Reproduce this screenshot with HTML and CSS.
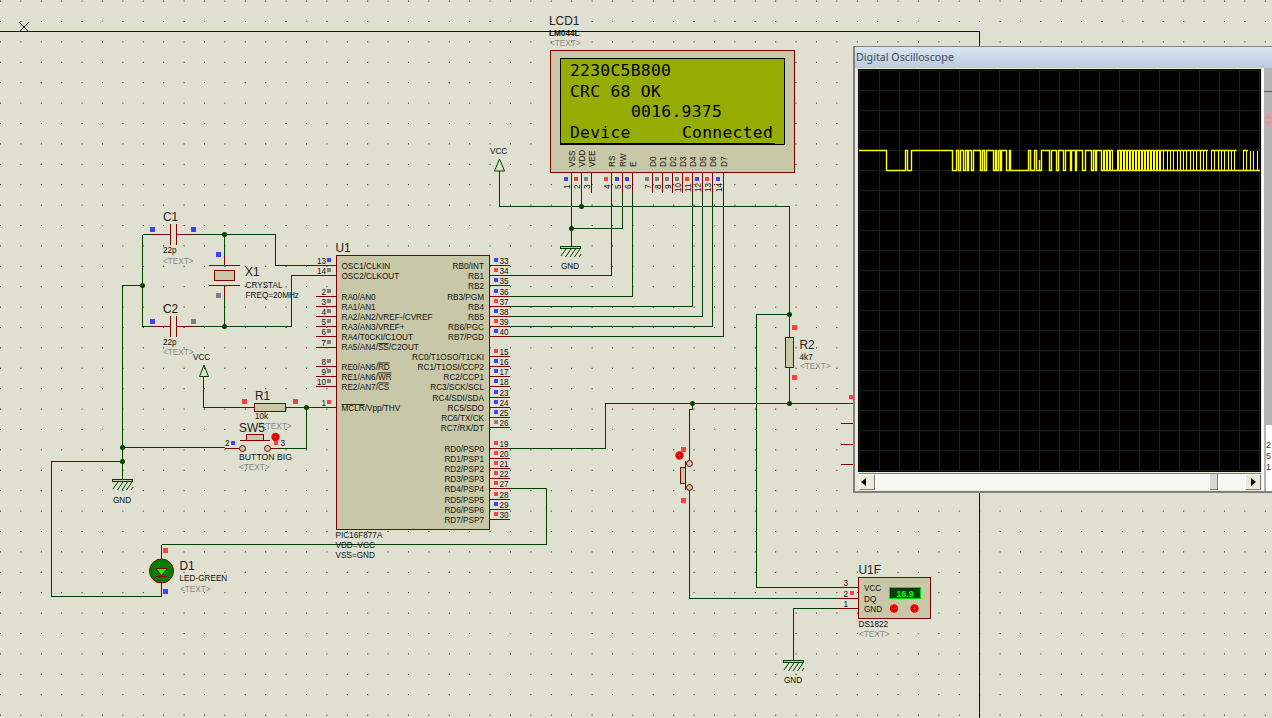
FILE: index.html
```html
<!DOCTYPE html>
<html lang="en">
<head>
<meta charset="utf-8">
<title>Proteus schematic</title>
<link rel="stylesheet" href="styles.css">
</head>
<body>
<main class="stage">
<svg class="sheet" width="1272" height="718" viewBox="0 0 1272 718">
  <defs>
    <pattern id="dots" patternUnits="userSpaceOnUse" width="20.4" height="20.4" x="0" y="0.6">
      <rect class="dot" x="0" y="0" width="1" height="1"/>
    </pattern>
    <g id="gnd">
      <rect class="gnd-bar" x="-10.5" y="0" width="20" height="2"/>
      <path class="hatch" d="M-10 10L-5 3M-5.500 11L0 3M-1 11L4.500 3M3.500 11L9 3M8 11L10 8"/>
    </g>
    <g id="probe">
      <circle class="probe-a" r="4.200"/>
      <circle class="probe-b" r="2.200"/>
      <path class="probe-c" d="M-1.500 0H1.500M0 -1.500V1.500"/>
    </g>
  </defs>
  <rect class="dots" width="1272" height="718"/>
  <path class="border" d="M0 31.500H979.500V718"/>
  <path class="xmark" d="M19 22L29 32M29 22L19 32"/>

  <!-- wires -->
  <path class="wire" d="M499.500 171V206.500H789.500V403.500M581.500 193V206.500M571.500 193V246M571.500 228.500H622.500V193M611.500 193V275.500H510M632.500 193V296.500H510M692.500 193V306.500H510M702.500 193V316.500H510M712.500 193V326.500H510M723.500 193V336.500H510"/>
  <path class="wire" d="M122.500 479V285.500H142.500M142.500 234.500V326.500M142.500 234.500H152M193 234.500H275.500V265.500H316M142.500 326.500H152M193 326.500H291.500V275.500H316M224.500 234.500V255M224.500 297V326.500"/>
  <path class="wire" d="M203.500 377V407.500H243M297 407.500H316M306.500 407.500V448.500H280M122.500 447.500H225M122.500 461.500H51.500V596.500H161.500M161.500 544.500H546.500V488.500H510M510 448.500H605.500V403.500H841"/>
  <path class="wire" d="M789.500 314.500H756.500V587.500H838M692.500 403.500V409.500H689.500V450M689.500 500V598.500H838M838 608.500H793.500V660"/>

  <g class="junctions">
    <circle cx="581.500" cy="206.500" r="2.500"/><circle cx="571.500" cy="228.500" r="2.500"/>
    <circle cx="142.500" cy="285.500" r="2.500"/><circle cx="224.500" cy="234.500" r="2.500"/>
    <circle cx="224.500" cy="326.500" r="2.500"/><circle cx="306.500" cy="407.500" r="2.500"/>
    <circle cx="122.500" cy="447.500" r="2.500"/><circle cx="122.500" cy="461.500" r="2.500"/>
    <circle cx="789.500" cy="314.500" r="2.500"/><circle cx="789.500" cy="403.500" r="2.500"/>
    <circle cx="692.500" cy="403.500" r="2.500"/>
  </g>

  <!-- power and ground -->
  <path class="vcc" d="M499.500 159L504.500 171H494.500Z"/>
  <text class="t8 dk" x="490" y="154">VCC</text>
  <path class="vcc" d="M204 365L208.500 376.500H199.500Z"/>
  <text class="t8 dk" x="193" y="360">VCC</text>
  <use href="#gnd" x="571" y="246"/>
  <text class="t8 dk" x="561" y="269">GND</text>
  <use href="#gnd" x="123" y="479"/>
  <text class="t8 dk" x="113" y="503">GND</text>
  <use href="#gnd" x="794" y="660"/>
  <text class="t8 dk" x="784" y="683">GND</text>

  <!-- LCD -->
  <text class="t12" x="549" y="25">LCD1</text>
  <text class="t8 dk bold" x="549" y="36">LM044L</text>
  <text class="t8 gr" x="550" y="46">&lt;TEXT&gt;</text>
  <rect class="body" x="550.500" y="50.500" width="244" height="122"/>
  <rect class="lcd-screen" x="560.500" y="58.500" width="224" height="86"/>
  <path class="lcd-rule" d="M561 143.500H775"/>
  <text class="lcd" x="570" y="76">2230C5B800</text>
  <text class="lcd" x="570" y="97">CRC 68 OK</text>
  <text class="lcd" x="631" y="117">0016.9375</text>
  <text class="lcd" x="570" y="138">Device</text>
  <text class="lcd" x="682" y="138">Connected</text>
  <g class="t8 dk">
    <text transform="rotate(-90 575 167)" x="575" y="167">VSS</text>
    <text transform="rotate(-90 585 167)" x="585" y="167">VDD</text>
    <text transform="rotate(-90 595 167)" x="595" y="167">VEE</text>
    <text transform="rotate(-90 615 167)" x="615" y="167">RS</text>
    <text transform="rotate(-90 626 167)" x="626" y="167">RW</text>
    <text transform="rotate(-90 636 167)" x="636" y="167">E</text>
    <text transform="rotate(-90 656 167)" x="656" y="167">D0</text>
    <text transform="rotate(-90 666 167)" x="666" y="167">D1</text>
    <text transform="rotate(-90 676 167)" x="676" y="167">D2</text>
    <text transform="rotate(-90 686 167)" x="686" y="167">D3</text>
    <text transform="rotate(-90 696 167)" x="696" y="167">D4</text>
    <text transform="rotate(-90 706 167)" x="706" y="167">D5</text>
    <text transform="rotate(-90 716 167)" x="716" y="167">D6</text>
    <text transform="rotate(-90 727 167)" x="727" y="167">D7</text>
  </g>
  <path class="pin" d="M571.500 172V193M581.500 172V193M591.500 172V193M611.500 172V193M622.500 172V193M632.500 172V193M652.500 172V193M662.500 172V193M672.500 172V193M682.500 172V193M692.500 172V193M702.500 172V193M712.500 172V193M723.500 172V193"/>
  <g class="t8 dk">
    <text transform="rotate(-90 570 189)" x="570" y="189">1</text>
    <text transform="rotate(-90 580 189)" x="580" y="189">2</text>
    <text transform="rotate(-90 590 189)" x="590" y="189">3</text>
    <text transform="rotate(-90 610 189)" x="610" y="189">4</text>
    <text transform="rotate(-90 621 189)" x="621" y="189">5</text>
    <text transform="rotate(-90 631 189)" x="631" y="189">6</text>
    <text transform="rotate(-90 651 189)" x="651" y="189">7</text>
    <text transform="rotate(-90 661 189)" x="661" y="189">8</text>
    <text transform="rotate(-90 671 189)" x="671" y="189">9</text>
    <text transform="rotate(-90 681 192)" x="681" y="192">10</text>
    <text transform="rotate(-90 691 192)" x="691" y="192">11</text>
    <text transform="rotate(-90 701 192)" x="701" y="192">12</text>
    <text transform="rotate(-90 711 192)" x="711" y="192">13</text>
    <text transform="rotate(-90 722 192)" x="722" y="192">14</text>
  </g>
  <g>
    <rect class="sq b" x="564" y="177"/><rect class="sq r" x="574" y="177"/><rect class="sq g" x="584" y="177"/>
    <rect class="sq r" x="604" y="177"/><rect class="sq b" x="615" y="177"/><rect class="sq b" x="625" y="177"/>
    <rect class="sq g" x="645" y="177"/><rect class="sq g" x="655" y="177"/><rect class="sq g" x="665" y="177"/>
    <rect class="sq g" x="675" y="177"/><rect class="sq r" x="685" y="177"/><rect class="sq b" x="695" y="177"/>
    <rect class="sq r" x="705" y="177"/><rect class="sq b" x="716" y="177"/>
  </g>

  <!-- C1, C2, X1 -->
  <text class="t12" x="163" y="221">C1</text>
  <text class="t8 dk" x="163" y="253">22p</text>
  <text class="t8 gr" x="163" y="264">&lt;TEXT&gt;</text>
  <path class="pin" d="M152 234.500H170.500M176.500 234.500H193M170.500 224V245M176.500 224V245"/>
  <text class="t12" x="163" y="313">C2</text>
  <text class="t8 dk" x="163" y="345">22p</text>
  <text class="t8 gr" x="163" y="355">&lt;TEXT&gt;</text>
  <path class="pin" d="M152 326.500H170.500M176.500 326.500H193M170.500 316V337M176.500 316V337"/>
  <rect class="sq5 b" x="150" y="227"/><rect class="sq5 b" x="191" y="227"/>
  <rect class="sq5 b" x="150" y="319"/><rect class="sq5 g" x="191" y="319"/>
  <path class="pin" d="M224.500 255V265.500M224.500 285.500V297M209 265.500H240M209 285.500H240"/>
  <rect class="body" x="214.500" y="270.500" width="20" height="10"/>
  <rect class="sq5 b" x="216" y="252"/><rect class="sq5 g" x="216" y="293"/>
  <text class="t12" x="245" y="276">X1</text>
  <text class="t8 dk" x="245.500" y="288">CRYSTAL</text>
  <text class="t8 dk" x="245.500" y="298">FREQ=20MHz</text>

  <!-- R1 and SW5 -->
  <text class="t12" x="255" y="400">R1</text>
  <path class="pin" d="M243 407.500H254M286 407.500H297"/>
  <rect class="body" x="254.500" y="403.500" width="31" height="8"/>
  <rect class="sq5 r" x="242" y="399"/><rect class="sq5 r" x="293" y="399"/>
  <text class="t8 dk" x="255" y="419">10k</text>
  <text class="t8 gr" x="261" y="429">&lt;TEXT&gt;</text>
  <text class="t12" x="239" y="432">SW5</text>
  <path class="pin" d="M225 448.500H239M270 448.500H280M240 440.500H270"/>
  <rect class="body" x="246.500" y="434.500" width="17" height="6"/>
  <circle class="contact" cx="242.500" cy="448.500" r="3"/><circle class="contact" cx="267.500" cy="448.500" r="3"/>
  <use href="#probe" x="275.500" y="437"/>
  <rect class="sq r" x="274" y="441"/><rect class="sq b" x="231" y="441"/>
  <text class="t8 dk" x="225" y="446">2</text>
  <text class="t8 dk" x="280.500" y="446">3</text>
  <text class="t8 dk wide" x="239" y="459.500">BUTTON BIG</text>
  <text class="t8 gr" x="239" y="469.500">&lt;TEXT&gt;</text>

  <!-- D1 -->
  <circle class="led" cx="161.500" cy="571" r="12"/>
  <path class="pin" d="M161.500 544.500V559M161.500 583V596M156 576H167"/>
  <path class="led-tri" d="M156 568.500H167L161.500 576Z"/>
  <rect class="sq5 r" x="163" y="548"/><rect class="sq5 b" x="163" y="589"/>
  <text class="t12" x="179.500" y="570">D1</text>
  <text class="t8 dk" x="179.500" y="581">LED-GREEN</text>
  <text class="t8 gr" x="180" y="591.500">&lt;TEXT&gt;</text>

  <!-- U1 -->
  <text class="t12" x="335.500" y="252">U1</text>
  <rect class="body" x="336.500" y="255.500" width="153" height="274"/>
  <path class="pin" d="M316 265.500H336M316 275.500H336M316 296.500H336M316 306.500H336M316 316.500H336M316 326.500H336M316 336.500H336M316 347.500H336M316 366.500H336M316 376.500H336M316 386.500H336M316 407.500H336"/>
  <path class="pin" d="M490 265.500H510M490 275.500H510M490 285.500H510M490 296.500H510M490 306.500H510M490 316.500H510M490 326.500H510M490 336.500H510M490 356.500H510M490 366.500H510M490 376.500H510M490 386.500H510M490 397.500H510M490 407.500H510M490 417.500H510M490 427.500H510M490 448.500H510M490 458.500H510M490 468.500H510M490 478.500H510M490 488.500H510M490 499.500H510M490 509.500H510M490 519.500H510"/>
  <g class="t8 dk">
    <text x="341.500" y="269">OSC1/CLKIN</text>
    <text x="341.500" y="279">OSC2/CLKOUT</text>
    <text x="341.500" y="299.500">RA0/AN0</text>
    <text x="341.500" y="309.500">RA1/AN1</text>
    <text x="341.500" y="319.500">RA2/AN2/VREF-/CVREF</text>
    <text x="341.500" y="329.500">RA3/AN3/VREF+</text>
    <text x="341.500" y="339.500">RA4/T0CKI/C1OUT</text>
    <text x="341.500" y="350">RA5/AN4/<tspan class="over">SS</tspan>/C2OUT</text>
    <text x="341.500" y="369.500">RE0/AN5/<tspan class="over">RD</tspan></text>
    <text x="341.500" y="379.500">RE1/AN6/<tspan class="over">WR</tspan></text>
    <text x="341.500" y="389.500">RE2/AN7/<tspan class="over">CS</tspan></text>
    <text x="341.500" y="411"><tspan class="over">MCLR</tspan>/Vpp/THV</text>
  </g>
  <g class="t8 dk end">
    <text x="484" y="269">RB0/INT</text><text x="484" y="279">RB1</text><text x="484" y="289">RB2</text>
    <text x="484" y="299.500">RB3/PGM</text><text x="484" y="309.500">RB4</text><text x="484" y="319.500">RB5</text>
    <text x="484" y="329.500">RB6/PGC</text><text x="484" y="339.500">RB7/PGD</text>
    <text x="484" y="359.500">RC0/T1OSO/T1CKI</text><text x="484" y="370">RC1/T1OSI/CCP2</text>
    <text x="484" y="380">RC2/CCP1</text><text x="484" y="390">RC3/SCK/SCL</text>
    <text x="484" y="400.500">RC4/SDI/SDA</text><text x="484" y="411">RC5/SDO</text>
    <text x="484" y="421">RC6/TX/CK</text><text x="484" y="431">RC7/RX/DT</text>
    <text x="484" y="452">RD0/PSP0</text><text x="484" y="462">RD1/PSP1</text>
    <text x="484" y="472">RD2/PSP2</text><text x="484" y="482">RD3/PSP3</text>
    <text x="484" y="492">RD4/PSP4</text><text x="484" y="503">RD5/PSP5</text>
    <text x="484" y="513">RD6/PSP6</text><text x="484" y="523">RD7/PSP7</text>
  </g>
  <g class="t8 dk end">
    <text x="326" y="264">13</text><text x="326" y="274">14</text><text x="326" y="295">2</text><text x="326" y="305">3</text>
    <text x="326" y="315">4</text><text x="326" y="325">5</text><text x="326" y="335">6</text><text x="326" y="346">7</text>
    <text x="326" y="365">8</text><text x="326" y="375">9</text><text x="326" y="385">10</text><text x="326" y="406">1</text>
  </g>
  <g class="t8 dk">
    <text x="499.500" y="264">33</text><text x="499.500" y="274">34</text><text x="499.500" y="284">35</text>
    <text x="499.500" y="295">36</text><text x="499.500" y="305">37</text><text x="499.500" y="315">38</text>
    <text x="499.500" y="325">39</text><text x="499.500" y="335">40</text><text x="499.500" y="355">15</text>
    <text x="499.500" y="365">16</text><text x="499.500" y="375">17</text><text x="499.500" y="385">18</text>
    <text x="499.500" y="396">23</text><text x="499.500" y="406">24</text><text x="499.500" y="416">25</text>
    <text x="499.500" y="426">26</text><text x="499.500" y="447">19</text><text x="499.500" y="457">20</text>
    <text x="499.500" y="467">21</text><text x="499.500" y="477">22</text><text x="499.500" y="487">27</text>
    <text x="499.500" y="498">28</text><text x="499.500" y="508">29</text><text x="499.500" y="518">30</text>
  </g>
  <g>
    <rect class="sq b" x="327" y="258"/><rect class="sq g" x="327" y="268"/><rect class="sq g" x="327" y="289"/>
    <rect class="sq g" x="327" y="299"/><rect class="sq g" x="327" y="309"/><rect class="sq g" x="327" y="319"/>
    <rect class="sq g" x="327" y="329"/><rect class="sq g" x="327" y="340"/><rect class="sq g" x="327" y="359"/>
    <rect class="sq g" x="327" y="369"/><rect class="sq g" x="327" y="379"/><rect class="sq r" x="327" y="400"/>
    <rect class="sq b" x="494" y="258"/><rect class="sq r" x="494" y="268"/><rect class="sq b" x="494" y="278"/>
    <rect class="sq b" x="494" y="289"/><rect class="sq r" x="494" y="299"/><rect class="sq b" x="494" y="309"/>
    <rect class="sq r" x="494" y="319"/><rect class="sq b" x="494" y="329"/><rect class="sq r" x="494" y="349"/>
    <rect class="sq b" x="494" y="359"/><rect class="sq b" x="494" y="369"/><rect class="sq b" x="494" y="379"/>
    <rect class="sq b" x="494" y="390"/><rect class="sq b" x="494" y="400"/><rect class="sq b" x="494" y="410"/>
    <rect class="sq g" x="494" y="420"/><rect class="sq r" x="494" y="441"/><rect class="sq r" x="494" y="451"/>
    <rect class="sq r" x="494" y="461"/><rect class="sq r" x="494" y="471"/><rect class="sq r" x="494" y="481"/>
    <rect class="sq r" x="494" y="492"/><rect class="sq b" x="494" y="502"/><rect class="sq r" x="494" y="512"/>
  </g>
  <text class="t8 dk" x="335.500" y="538">PIC16F877A</text>
  <text class="t8 dk" x="335.500" y="548">VDD=VCC</text>
  <text class="t8 dk" x="335.500" y="558">VSS=GND</text>

  <!-- R2 and vertical switch -->
  <path class="pin" d="M789.500 327V337M789.500 368V378"/>
  <rect class="body" x="785.500" y="337.500" width="8" height="30"/>
  <rect class="sq5 r" x="792" y="325"/><rect class="sq5 r" x="792" y="375"/>
  <text class="t12" x="799.500" y="349">R2</text>
  <text class="t8 dk" x="799.500" y="359.500">4k7</text>
  <text class="t8 gr" x="800" y="369">&lt;TEXT&gt;</text>
  <path class="pin" d="M689.500 450V460M689.500 491V500M685.500 461V490"/>
  <rect class="body" x="680.500" y="467.500" width="5" height="16"/>
  <circle class="contact" cx="689.500" cy="463.500" r="3"/><circle class="contact" cx="689.500" cy="487.500" r="3"/>
  <use href="#probe" x="679.500" y="455.500"/>
  <rect class="sq5 r" x="681" y="447"/><rect class="sq5 r" x="681" y="498"/>
  <path class="pin" d="M841 403.500H855M841 423.500H855M841 444.500H855M841 464.500H855"/>
  <rect class="sq r" x="849" y="395"/>

  <!-- U1F -->
  <text class="t12" x="858.500" y="573.500">U1F</text>
  <rect class="body" x="858.500" y="577.500" width="72" height="41"/>
  <path class="pin" d="M838 587.500H858M838 598.500H858M838 608.500H858"/>
  <text class="t8 dk" x="843.500" y="586">3</text>
  <text class="t8 dk" x="843.500" y="596.500">2</text>
  <text class="t8 dk" x="843.500" y="607">1</text>
  <rect class="sq r" x="850" y="591"/>
  <text class="t8 dk" x="864" y="591">VCC</text>
  <text class="t8 dk" x="864" y="601.500">DQ</text>
  <text class="t8 dk" x="864" y="612">GND</text>
  <rect class="temp" x="889.500" y="587.500" width="31" height="11"/>
  <text class="temp-text" x="905" y="597">16.9</text>
  <use href="#probe" x="894" y="608.500"/>
  <use href="#probe" x="914.500" y="608.500"/>
  <text class="t8 dk" x="858.500" y="627">DS1822</text>
  <text class="t8 gr" x="859" y="636.500">&lt;TEXT&gt;</text>
</svg>

<section class="scope">
  <header class="scope-title">Digital Oscilloscope</header>
  <div class="scope-body">
    <div class="scope-main">
      <svg class="scope-screen" width="401" height="401" viewBox="859 70 401 401">
        <defs>
          <pattern id="grid" patternUnits="userSpaceOnUse" x="879" y="90" width="20" height="20">
            <path class="grid-line" d="M0.500 0V20M0 0.500H20"/>
          </pattern>
        </defs>
        <rect x="859" y="70" width="401" height="401" class="grid-fill"/>
        <path class="trace" d="M859 150.500H886.500V170.500H905.500V150.500H907.500V170.500H911.500V150.500H952.500V170.500H956.500V150.500H958.500V170.500H960.500V150.500H963.500V170.500H965.500V150.500H967.500V170.500H968.500V150.500H971.500V170.500H973.500V150.500H980.500V170.500H982.500V150.500H984.500V170.500H986.500V150.500H993.500V170.500H995.500V150.500H996.500V170.500H998.500V150.500H1000.500V170.500H1001.500V150.500H1006.500V170.500H1009.500V150.500H1010.500V170.500H1028.500V150.500H1030.500V170.500H1034.500V150.500H1036.500V170.500H1039.500V160V170.500H1041.500V150.500H1049.500V170.500H1051.500V150.500H1056.500V170.500H1058.500V150.500H1063.500V170.500H1065.500V150.500H1070.500V170.500H1071.500V150.500H1075.500V170.500H1076.500V150.500H1082.500V170.500H1085.500V150.500H1091.500V170.500H1093.500V150.500H1095.500V170.500H1096.500V150.500H1101.500V170.500H1103"/>
        <path class="trace" d="M1103 150.500H1113M1117 150.500H1208M1211 150.500H1236.500M1243 150.500H1248M1103 170.500H1260"/>
        <path class="bars heavy" d="M1103 160.500H1113M1117 160.500H1160"/>
        <path class="bars light" d="M1160 160.500H1208M1211 160.500H1237M1243 160.500H1249M1250 160.500H1260"/>
      </svg>
      <div class="scrollbar">
        <span class="arrow left"></span>
        <span class="track"><span class="thumb"></span></span>
        <span class="arrow right"></span>
      </div>
    </div>
    <aside class="scope-side">
      <div class="side-top"></div>
      <div class="side-knob"><span class="knob-a"></span><span class="knob-b"></span></div>
      <div class="side-card"><span>2</span><span>5</span><span>1</span></div>
    </aside>
  </div>
</section>
</main>
</body>
</html>
```
FILE: styles.css
```css
* { box-sizing: border-box; }
html, body { margin: 0; padding: 0; background: #e0e0d0; }
.stage { position: relative; width: 1272px; height: 718px; overflow: hidden; background: #e0e0d0; }
.sheet { position: absolute; left: 0; top: 0; display: block; font-family: "Liberation Sans", Arial, sans-serif; }

.dots { fill: url(#dots); }
.dot { fill: #000; shape-rendering: crispEdges; }
.border { fill: none; stroke: #0000a0; stroke-width: 1; shape-rendering: crispEdges; }
.xmark { fill: none; stroke: #222; stroke-width: 1; }

.wire { fill: none; stroke: #004000; stroke-width: 1; shape-rendering: crispEdges; }
.pin { fill: none; stroke: #800000; stroke-width: 1; shape-rendering: crispEdges; }
.junctions circle { fill: #004000; }
.vcc { fill: none; stroke: #004000; stroke-width: 1; }
.gnd-bar { fill: #c8c8a8; stroke: #004000; stroke-width: 1; shape-rendering: crispEdges; }
.hatch { fill: none; stroke: #004000; stroke-width: 1; }

.body { fill: #c8c8a8; stroke: #800000; stroke-width: 1; shape-rendering: crispEdges; }
.contact { fill: #c8c8a8; stroke: #800000; stroke-width: 1; }
.led { fill: #008000; stroke: #800000; stroke-width: 1; }
.led-tri { fill: #00ff00; stroke: #800000; stroke-width: 1; }
.probe-a { fill: #ff0000; }
.probe-b { fill: #900000; }
.probe-c { stroke: #ff3030; stroke-width: 1; fill: none; }

.sq { width: 4px; height: 4px; shape-rendering: crispEdges; }
.sq5 { width: 5px; height: 5px; shape-rendering: crispEdges; }
.b { fill: #4040ff; }
.r { fill: #ff4040; }
.g { fill: #808080; }

.t12 { font-size: 11.9px; fill: #222; }
.t8 { font-size: 8.2px; }
.dk { fill: #111; }
.gr { fill: #888; }
.bold { font-weight: bold; }
.wide { font-size: 8.7px; }
.end { text-anchor: end; }
.over { text-decoration: overline; }

.lcd-screen { fill: #94ad00; stroke: #000; stroke-width: 1; shape-rendering: crispEdges; }
.lcd-rule { fill: none; stroke: #000; stroke-width: 2; shape-rendering: crispEdges; }
.lcd { font-family: "DejaVu Sans Mono", "Liberation Mono", monospace; font-size: 16.4px; letter-spacing: 0.25px; fill: #000; white-space: pre; }

.temp { fill: #004000; stroke: #00e000; stroke-width: 1.500; shape-rendering: crispEdges; }
.temp-text { font-size: 9px; fill: #00ff00; text-anchor: middle; font-weight: bold; }

/* oscilloscope window floating over the sheet */
.scope {
  position: absolute; left: 853px; top: 46px; width: 430px; height: 447px;
  display: flex; flex-direction: column;
  background: #ece9d8; border: 2px solid #808080; border-top-width: 1px; border-bottom-width: 2px;
}
.scope-title {
  height: 21px; flex: none; padding: 0 0 0 1px;
  font: 10.7px/20px "Noto Sans", "Liberation Sans", sans-serif; color: #3c4a5a;
  background: linear-gradient(#dbe6f2, #b9c9dd);
}
.scope-body { flex: 1; display: flex; min-height: 0; background: #fff; }
.scope-main { width: 407px; flex: none; padding: 2px 0 0 4px; display: flex; flex-direction: column; background: #ece9d8; }
.scope-screen { display: block; flex: none; background: #000; box-shadow: 0 0 0 1px #000; }
.scrollbar {
  flex: none; height: 17px; margin: 2px 0 0 0; width: 402px; display: flex;
  border-top: 1px solid #808080;
}
.arrow { width: 16px; flex: none; position: relative; background: #ece9d8; border: 1px solid; border-color: #fff #808080 #808080 #fff; }
.arrow::after {
  content: ""; position: absolute; top: 3px; border: 4px solid transparent;
}
.arrow.left::after { left: 1px; border-right: 5px solid #000; border-left-width: 0; }
.arrow.right::after { left: 5px; border-left: 5px solid #000; border-right-width: 0; }
.track { flex: 1; position: relative; background: #f7f7f4; }
.thumb { position: absolute; left: 335px; top: 0; width: 8px; height: 16px; background: #d8d8d0; border-right: 1px solid #808080; border-bottom: 1px solid #808080; }
.grid-fill { fill: url(#grid); }
.grid-line { fill: none; stroke: #0b2a10; stroke-width: 1; shape-rendering: crispEdges; }
.trace { fill: none; stroke: #ffff00; stroke-width: 1.4; }
.bars { fill: none; stroke: #ffff00; stroke-width: 20; shape-rendering: crispEdges; }
.heavy { stroke-dasharray: 2 1; }
.light { stroke-dasharray: 1 2.300; }

.scope-side { flex: 1; display: flex; flex-direction: column; background: #b4b4b4; border-left: 2px solid #fff; }
.side-top { height: 24px; flex: none; border-bottom: 1px solid #555; background: #b4b4b4; }
.side-knob { flex: none; height: 24px; margin-top: 18px; position: relative; }
.knob-a, .knob-b { position: absolute; left: 1px; width: 0; height: 0; border: 3px solid transparent; }
.knob-a { top: 2px; border-bottom: 7px solid #f09090; border-top-width: 0; }
.knob-b { top: 11px; border-top: 7px solid #f09090; border-bottom-width: 0; }
.side-card {
  margin: auto 0 0 2px; height: 66px; background: #fff; display: flex; flex-direction: column;
  justify-content: flex-end; gap: 1px; padding-bottom: 19px;
  font: 9px/10px "Liberation Sans", sans-serif; color: #333;
}
```
